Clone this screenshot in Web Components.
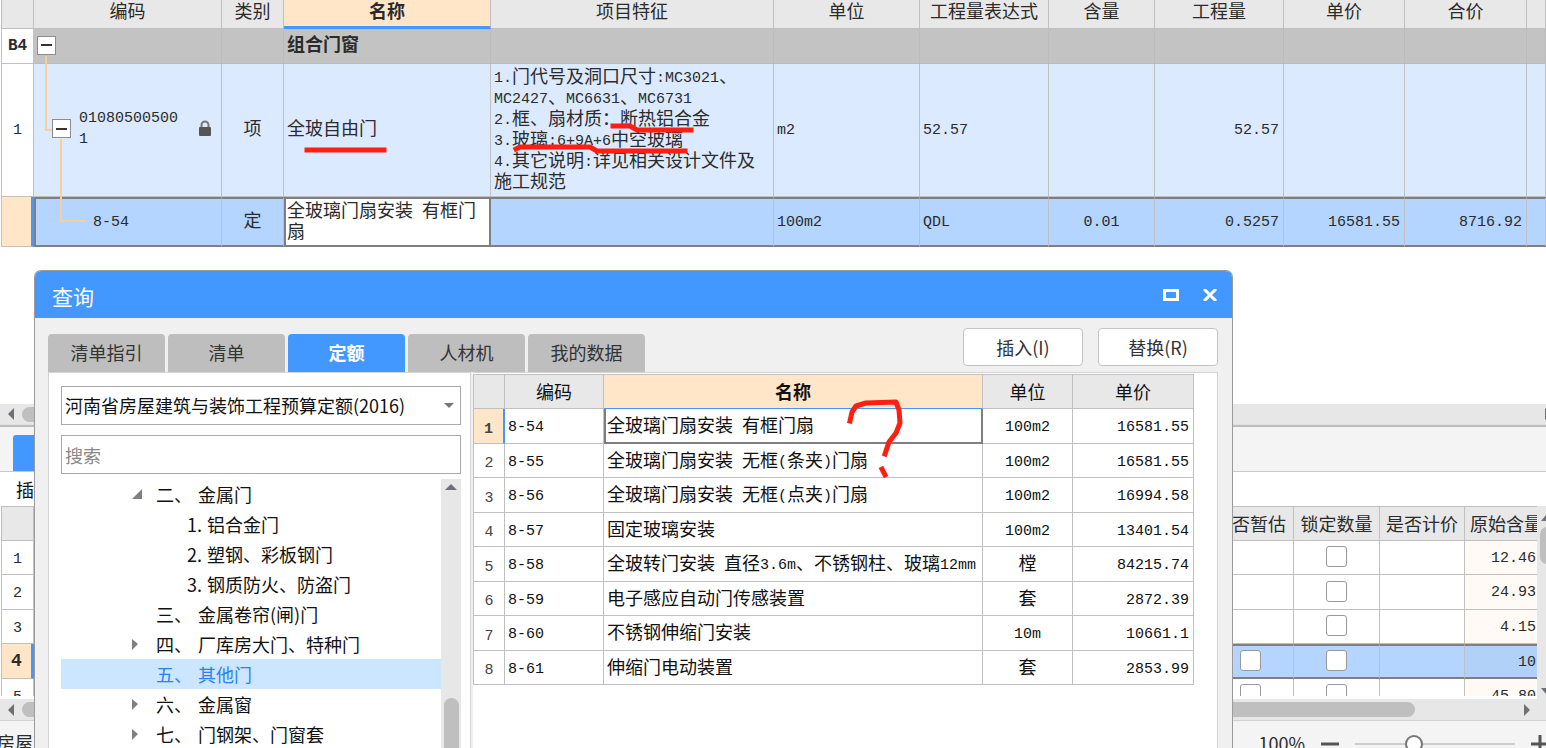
<!DOCTYPE html>
<html lang="zh-CN">
<head>
<meta charset="utf-8">
<meta name="viewport" content="width=device-width, initial-scale=1">
<title>查询</title>
<style>
  html, body { margin: 0; height: 100%; }
  body {
    --blue: #4398ff;
    --line: #c0c0c0;
    --head: #e8e8e8;
    --warm: #ffe6c8;
    --pale: #dceaff;
    --pick: #b3d5ff;
    --frame: #7f7f7f;
    font: 18px/21px "Noto Sans CJK SC", sans-serif;
    color: #2b2b2b;
    background: #fff;
  }
</style>
</head>
<body>
<app-shell></app-shell>
<script>
const gridCss = `
  * { box-sizing: border-box; }
  table { border-collapse: separate; border-spacing: 0; table-layout: fixed; width: 100%; }
  th, td { padding: 0 3px; border: 0 solid var(--line); border-width: 0 1px 1px 0; font-weight: 400;
    text-align: left; vertical-align: middle; white-space: nowrap; }
  th { background: var(--head); text-align: center; }
  tbody th { background: #fff; padding: 0; }
  .n { font: 15px/15px "Liberation Mono", monospace; vertical-align: 1px; white-space: pre; }
  .b, .b .n { font-weight: 700; }
  .c { text-align: center; }
  .r { text-align: right; }
  th.on { background: var(--warm); font-weight: 700; }
  th.on .n { font-weight: 700; }
`;

/* Latin letters and digits are half as wide as a Chinese character. */
const half = s => s.replace(/[\x20-\x7e]+/g, m => `<span class="n">${m}</span>`);

function define(name, html, css = '') {
  customElements.define(name, class extends HTMLElement {
    constructor() {
      super();
      const t = document.createElement('template');
      t.innerHTML = `<style>:host{display:block}${css}</style>` + html;
      this.attachShadow({ mode: 'open' }).append(t.content.cloneNode(true));
    }
  });
}

define('toggle-box', `<button type="button" aria-label="折叠"><svg width="11" height="2" aria-hidden="true"><path d="M0 1H11" stroke="#333" stroke-width="2"/></svg></button>`, `
  :host { display: inline-block; flex: none; position: relative; z-index: 1; }
  button { display: grid; place-items: center; box-sizing: border-box; width: 19px; height: 19px; padding: 0;
    background: #fff; border: 1px solid #8c8c8c; }
`);

const topCols = [32, 188, 62, 207, 283, 146, 129, 106, 129, 121, 122];
const topRow = (cls, head, cells) => `<tr class="${cls}"><th scope="row">${head}</th>${cells.map(([k, t]) => `<td class="${k}">${t}</td>`).join('')}<td></td></tr>`;

define('budget-grid', `
  <table>
    <colgroup>${topCols.map(w => `<col style="width:${w}px">`).join('')}<col></colgroup>
    <thead><tr><th></th>${['编码', '类别', '名称', '项目特征', '单位', '工程量表达式', '含量', '工程量', '单价', '合价']
      .map(t => `<th scope="col" class="${t === '名称' ? 'on' : ''}">${t}</th>`).join('')}<th></th></tr></thead>
    <tbody>
      ${topRow('group', half('B4'), [['t1', '<toggle-box></toggle-box>'], ['', ''], ['b', '组合门窗'], ['', ''], ['', ''], ['', ''], ['', ''], ['', ''], ['', ''], ['', '']])}
      ${topRow('item', half('1'), [
        ['t2', `<div><toggle-box></toggle-box><span class="n code">010805005001</span>
          <svg width="14" height="17" viewBox="0 0 14 17" aria-hidden="true"><path d="M3.5 8V5a3.500 3.500 0 0 1 7 0v3" fill="none" stroke="#777" stroke-width="2"/><rect x="1" y="7" width="12" height="9" rx="1" fill="#555"/></svg></div>`],
        ['c', '项'], ['', '全玻自由门'],
        ['wrap', ['1.门代号及洞口尺寸:MC3021、', 'MC2427、MC6631、MC6731', '2.框、扇材质：断热铝合金', '3.玻璃:6+9A+6中空玻璃', '4.其它说明:详见相关设计文件及', '施工规范'].map(half).join('<br>')],
        ['', half('m2')], ['', half('52.57')], ['', ''], ['r', half('52.57')], ['', ''], ['', '']])}
      ${topRow('sel', '', [
        ['t3', half('8-54')], ['c', '定'], ['edit', half('全玻璃门扇安装 有框门') + '<br>扇'], ['', ''],
        ['', half('100m2')], ['', half('QDL')], ['c', half('0.01')], ['r', half('0.5257')], ['r', half('16581.55')], ['r', half('8716.92')]])}
    </tbody>
  </table>
  <svg class="links" width="100" height="246" aria-hidden="true"><path d="M46 56V130H52M61 139V221H86" fill="none" stroke="#f8cf96" stroke-width="2"/></svg>
`, gridCss + `
  :host { position: relative; flex: 1; min-height: 247px; overflow: hidden; }
  table { border-left: 1px solid var(--line); margin-left: 1px; width: calc(100% - 1px); }
  thead th { height: 29px; padding: 0 0 8px; line-height: 20px; }
  thead th.on { border-bottom: 3px solid var(--blue); padding-bottom: 6px; }
  tbody th, tbody td { padding-bottom: 5px; }
  .group > * { height: 35px; }
  .group td { background: #c3c3c3; border-color: #bbb; }
  .group th .n { font-weight: 700; font-size: 16px; }
  .t1 toggle-box { vertical-align: middle; }
  .item > * { height: 133px; }
  .item td { background: var(--pale); }
  .item td.r, .sel td.r { padding-right: 4px; }
  .item td.t2 { padding-bottom: 3px; }
  .t2 div { display: flex; align-items: center; gap: 8px; padding-left: 15px; }
  .code { width: 104px; line-height: 21px; white-space: normal; word-break: break-all; }
  .t2 svg { margin-left: 7px; }
  .sel > * { height: 50px; }
  .sel th { background: var(--warm); border-right: 3px solid var(--blue); }
  .sel td { background: var(--pick); border-top: 2px solid var(--frame); border-bottom: 2px solid var(--frame); }
  .sel td.t3 { padding-left: 57px; border-left: 2px solid var(--frame); }
  .sel td.edit { background: #fff; border: 2px solid var(--frame); padding: 0 1px 4px; }
  .links { position: absolute; left: 0; top: 0; pointer-events: none; }
`);

define('scroll-track', `<svg class="a" width="8" height="12" aria-hidden="true"><path d="M7 0V12L1 6z" fill="#6f6f78"/></svg><i></i>
  <svg class="z" width="8" height="12" aria-hidden="true"><path d="M1 0V12L7 6z" fill="#6f6f78"/></svg>`, `
  :host { display: flex; align-items: center; height: 20px; padding: 0 0 0 7px; background: #e7e7e7; }
  i { height: 15px; border-radius: 8px; background: #bfbfbf; margin-left: 7px; width: var(--thumb, 50%); }
  .z { margin-left: auto; margin-right: var(--end, 15px); flex: none; }
  .a { flex: none; }
`);

const lowRows = [['1', '12.46', 0], ['2', '24.93', 0], ['3', '4.15', 0], ['4', '10', 1], ['5', '45.80', 1]];
const box = name => `<input type="checkbox" aria-label="${name}">`;
define('detail-grid', `
  <div class="view"><table>
    <colgroup><col style="width:32px"><col><col style="width:85px"><col style="width:86px"><col style="width:85px"><col style="width:73px"></colgroup>
    <thead><tr><th></th><th></th><th scope="col" class="cut">否暂估</th><th scope="col">锁定数量</th><th scope="col">是否计价</th><th scope="col" class="last">原始含量</th></tr></thead>
    <tbody>${lowRows.map(([n, v, b]) => `<tr class="${n === '4' ? 'sel' : ''}"><th scope="row" class="${n === '4' ? 'on' : ''}">${half(n)}</th><td></td>
      <td class="c">${b ? box('是否暂估') : ''}</td><td class="c">${box('锁定数量')}</td><td></td><td class="r">${half(v)}</td></tr>`).join('')}</tbody>
  </table></div>
  <div class="bar" aria-hidden="true"><svg width="9" height="193"><path d="M4 15L9 9V15zM4 182H9V188z" fill="#6f6f78"/><rect x="3" y="21" width="15" height="37" rx="7" fill="#bfbfbf"/></svg></div>
`, gridCss + `
  :host { display: flex; height: 193px; overflow: hidden; }
  .view { flex: 1; min-width: 0; height: 190px; overflow: hidden; }
  .bar { width: 9px; background: #e7e7e7; }
  table { border-left: 1px solid var(--line); border-top: 1px solid var(--line); margin-left: 1px; width: 100%; }
  thead th { height: 34px; padding: 0; }
  thead th.cut { text-align: right; padding-right: 7px; }
  thead th.last { text-align: left; padding-left: 5px; border-right: 0; }
  tbody tr > * { height: 34px; }
  tbody tr > th { padding-bottom: 3px; }
  tbody tr:nth-child(even) > * { height: 35px; }
  td.c { padding: 0 0 2px; }
  td.c:nth-child(3) { text-align: right; padding-right: 32px; }
  td.r { background: #fffaf5; padding: 0 2px 5px 0; border-right: 0; }
  .sel td { background: var(--pick); border-top: 2px solid var(--frame); border-bottom: 2px solid var(--frame); }
  .sel td.r { background: #b1d1f8; }
  .sel th { border-right: 3px solid var(--blue); }
  .sel th .n { font-size: 18px; }
  input { appearance: none; display: block; width: 21px; height: 21px; margin: 0 auto;
    background: #fff; border: 1px solid #999; border-radius: 3px; }
  td:nth-child(3) input { margin-right: 0; }
`);

define('status-bar', `
  <span class="name">房屋建</span>
  <div class="zoom"><label for="z">100%</label>
    <button type="button" aria-label="缩小"><svg width="18" height="18" aria-hidden="true"><path d="M0 9H18" stroke="#555" stroke-width="3"/></svg></button>
    <input id="z" type="range" min="0" max="100" value="35">
    <button type="button" aria-label="放大"><svg width="18" height="18" aria-hidden="true"><path d="M0 9H18M9 0V18" stroke="#555" stroke-width="3"/></svg></button>
  </div>
`, `
  :host { display: flex; flex: none; justify-content: space-between; height: 28px; box-sizing: border-box; overflow: hidden;
    border-top: 1px solid #d0d0d0; background: #f4f4f4; }
  .name { margin-left: -3px; padding-top: 11px; }
  .zoom { display: flex; flex: none; align-items: center; height: 45px; gap: 16px; margin-right: -3px; }
  button { flex: none; display: flex; border: 0; padding: 0; background: none; }
  input { appearance: none; width: 160px; height: 20px; margin: 0; background: linear-gradient(#ccc, #ccc) center / 100% 2px no-repeat; }
  input::-webkit-slider-thumb { appearance: none; box-sizing: border-box; width: 18px; height: 18px; border-radius: 50%; background: #fff; border: 2px solid #777; }
`);

const tree = [['open', '二、', '金属门'], ['kid', '1.', '铝合金门'], ['kid', '2.', '塑钢、彩板钢门'], ['kid', '3.', '钢质防火、防盗门'],
  ['', '三、', '金属卷帘(闸)门'], ['more', '四、', '厂库房大门、特种门'], ['cur', '五、', '其他门'], ['more', '六、', '金属窗'], ['more', '七、', '门钢架、门窗套']];
const arrows = { open: 'M0 10L10 0V10z', more: 'M0 0L6 5L0 11z' };
define('quota-tree', `
  <ul role="tree">${tree.map(([k, n, t]) => `<li role="treeitem" class="${k}">${k === 'kid' ? '' : `<span class="arrow">${arrows[k] ? `<svg width="10" height="11" aria-hidden="true"><path d="${arrows[k]}" fill="#808080"/></svg>` : ''}</span>`}<span class="no">${n}</span><span>${t}</span></li>`).join('')}</ul>
  <div class="bar" aria-hidden="true"><svg width="12" height="6"><path d="M0 6L6 0L12 6z" fill="#6f6f78"/></svg><i></i></div>
`, `
  :host { display: flex; flex: 1; min-height: 0; color: #111; overflow: hidden; }
  ul { flex: 1; margin: 0; padding: 0; list-style: none; }
  li { display: flex; align-items: center; height: 30px; padding-left: 71px; }
  .arrow { width: 24px; height: 11px; display: flex; }
  .no { width: 42px; }
  .kid { padding-left: 126px; }
  .kid .no { width: 20px; }
  .cur { background: #cce6ff; color: #2a80f0; }
  .bar { width: 20px; background: #e7e7e7; display: flex; flex-direction: column; align-items: center; padding-top: 5px; box-sizing: border-box; }
  .bar svg { flex: none; }
  .bar i { width: 15px; flex: 1; margin-top: 208px; border-radius: 8px 8px 0 0; background: #bfbfbf; }
`);

const quota = [['8-54', '全玻璃门扇安装 有框门扇', '100m2', '16581.55'], ['8-55', '全玻璃门扇安装 无框(条夹)门扇', '100m2', '16581.55'],
  ['8-56', '全玻璃门扇安装 无框(点夹)门扇', '100m2', '16994.58'], ['8-57', '固定玻璃安装', '100m2', '13401.54'],
  ['8-58', '全玻转门安装 直径3.6m、不锈钢柱、玻璃12mm', '樘', '84215.74'], ['8-59', '电子感应自动门传感装置', '套', '2872.39'],
  ['8-60', '不锈钢伸缩门安装', '10m', '10661.1'], ['8-61', '伸缩门电动装置', '套', '2853.99']];
define('quota-table', `
  <table>
    <colgroup><col style="width:31px"><col style="width:99px"><col><col style="width:90px"><col style="width:121px"></colgroup>
    <thead><tr><th></th><th scope="col">编码</th><th scope="col" class="on">名称</th><th scope="col">单位</th><th scope="col">单价</th></tr></thead>
    <tbody>${quota.map(([a, b, c, d], i) => `<tr class="${i ? '' : 'first'}"><th scope="row" class="${i ? '' : 'on'}">${half(String(i + 1))}</th>
      <td>${half(a)}</td><td class="name">${half(b)}</td><td class="c">${half(c)}</td><td class="r">${half(d)}</td></tr>`).join('')}</tbody>
  </table>
`, gridCss + `
  :host { color: #111; }
  table { border-top: 1px solid var(--line); border-left: 1px solid var(--line); }
  thead th { height: 34px; padding: 0; }
  thead th.on { border-bottom-color: var(--blue); }
  tbody tr > * { height: 34px; }
  tbody tr:nth-child(odd) > * { height: 35px; }
  td { padding: 0 3px 3px; }
  td.r { padding-right: 4px; }
  tbody th { color: #444; }
  .first th { border-right: 2px solid var(--blue); }
  .first .name { border: 2px solid var(--frame); border-top: 0; padding: 0 1px 3px; }
`);

define('dialog-tab', `<button type="button" role="tab"><slot></slot></button>`, `
  button { width: 117px; height: 38px; padding: 0 0 2px; border: 0; border-radius: 4px 4px 0 0; background: #bebebe; font: inherit; color: #333; }
  :host([active]) button { background: var(--blue); color: #fff; font-weight: 700; }
`);
define('action-button', `<button type="button"><slot></slot></button>`, `
  button { width: 120px; height: 38px; padding: 0; border: 1px solid #c4c4c4; border-radius: 4px; background: #fff; font: inherit; color: #333; }
`);

define('query-dialog', `
  <header><h1>查询</h1>
    <button type="button" aria-label="最大化"><svg width="16" height="12" aria-hidden="true"><path d="M1.500 1.500H14.500V10.500H1.500z" fill="none" stroke="#fff" stroke-width="3"/></svg></button>
    <button type="button" aria-label="关闭"><svg width="16" height="12" aria-hidden="true"><path d="M2 0L14 12M14 0L2 12" stroke="#fff" stroke-width="3"/></svg></button>
  </header>
  <div class="tools">
    <div class="tabs" role="tablist"><dialog-tab>清单指引</dialog-tab><dialog-tab>清单</dialog-tab><dialog-tab active>定额</dialog-tab><dialog-tab>人材机</dialog-tab><dialog-tab>我的数据</dialog-tab></div>
    <div class="acts"><action-button>插入(I)</action-button><action-button>替换(R)</action-button></div>
  </div>
  <div class="main">
    <section class="left">
      <div class="pick"><select aria-label="定额库"><option>河南省房屋建筑与装饰工程预算定额(2016)</option></select>
        <svg width="10" height="6" aria-hidden="true"><path d="M0 0H10L5 5z" fill="#777"/></svg></div>
      <input type="text" placeholder="搜索" aria-label="搜索">
      <quota-tree></quota-tree>
    </section>
    <section class="right"><quota-table></quota-table></section>
  </div>
`, `
  :host { display: flex; flex-direction: column; box-sizing: border-box; background: #f0f0f0; border: 1px solid #9b9b9b; border-bottom: 0;
    border-radius: 7px 7px 0 0; overflow: hidden; }
  * { box-sizing: border-box; }
  header { display: flex; flex: none; align-items: center; gap: 23px; height: 47px; padding: 0 14px 0 17px; background: var(--blue); color: #fff; }
  h1 { flex: 1; margin: 0; padding-top: 2px; font-size: 21px; font-weight: 400; line-height: 30px; }
  header button { display: flex; padding: 0; border: 0; background: none; }
  .tools { display: flex; flex: none; justify-content: space-between; align-items: flex-end; height: 54px; padding: 0 14px 0 13px; }
  .tabs { display: flex; gap: 3px; }
  .acts { display: flex; gap: 15px; padding-bottom: 6px; }
  .main { display: flex; flex: 1; min-height: 0; gap: 2px; padding: 0 14px 0 13px; }
  .left { display: flex; flex: none; flex-direction: column; width: 423px; padding: 13px 9px 0 12px; background: #fff; border: 1px solid #d4d4d4; border-bottom: 0; }
  .right { flex: 1; min-width: 0; background: #fff; padding: 1px 23px 0 0; border: 1px solid #d4d4d4; border-width: 1px 1px 0 0; }
  .pick { position: relative; flex: none; height: 39px; margin-bottom: 10px; }
  .pick svg { position: absolute; right: 7px; top: 17px; pointer-events: none; }
  select, input { display: block; width: 100%; height: 39px; padding: 0 3px; margin: 0; border: 1px solid #aaa; border-radius: 0; background: #fff; font: inherit; color: #111; appearance: none; }
  input { flex: none; margin-bottom: 5px; }
  input::placeholder { color: #888; }
`);

define('red-marks', `
  <svg aria-hidden="true" width="920" height="490" fill="none" stroke="#ff1e12" stroke-width="5" stroke-linecap="square" stroke-linejoin="round">
    <path d="M307 150H384"/>
    <path d="M613 126H630L637 130H691"/>
    <path d="M516 149L520 147H590L597 151H685"/>
    <path d="M850 421L852 412L856 406L866 403L896 402L899 410L900 423L896 433L889 442L885 454"/>
    <path d="M882 469L885 475"/>
  </svg>
`, `:host { pointer-events: none; } svg { display: block; }`);

define('app-shell', `
  <budget-grid></budget-grid>
  <scroll-track class="upper"></scroll-track>
  <div class="split"></div>
  <div class="strip"><button type="button" aria-label="明细"></button></div>
  <div class="toolbar">插</div>
  <detail-grid></detail-grid>
  <scroll-track class="lower"></scroll-track>
  <status-bar></status-bar>
  <query-dialog></query-dialog>
  <red-marks></red-marks>
`, `
  :host { display: flex; flex-direction: column; position: relative; height: 100vh; overflow: hidden; }
  scroll-track, .split, .strip, .toolbar, detail-grid { flex: none; }
  .upper { --end: -6px; }
  .lower { --thumb: calc(100% - 146px); height: 21px; }
  .split { height: 3px; background: #bdbdbd; border-top: 1px solid #e0e0e0; box-sizing: border-box; }
  .strip { height: 45px; box-sizing: border-box; background: #f4f4f4; border-bottom: 1px solid #c8c8c8; padding: 8px 0 0 13px; }
  .strip button { display: block; width: 120px; height: 36px; border: 0; border-radius: 3px 3px 0 0; background: var(--blue); }
  .toolbar { height: 34px; line-height: 34px; padding-left: 16px; color: #111; }
  query-dialog { position: absolute; left: 34px; right: 313px; top: 270px; bottom: 0; }
  red-marks { position: absolute; left: 0; top: 0; }
`);
</script>
</body>
</html>
